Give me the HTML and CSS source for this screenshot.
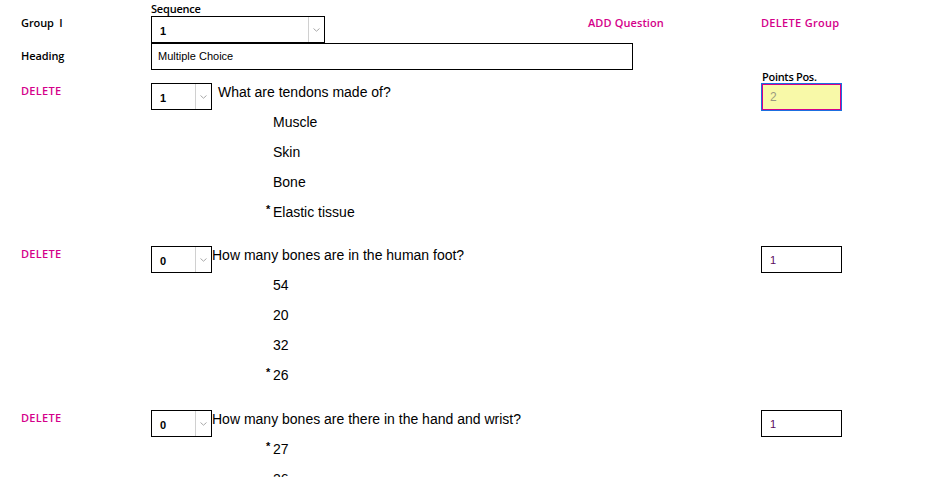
FILE: index.html
```html
<!DOCTYPE html>
<html>
<head>
<meta charset="utf-8">
<link rel="stylesheet" href="styles.css">
</head>
<body>
<div class="page">
  <div class="header">
    <div class="seq-label">Sequence</div>
    <div class="label group-label">Group&nbsp; I</div>
    <div class="select select-wide"><span class="sel-val">1</span><span class="sel-arrow"><svg width="7" height="4" viewBox="0 0 7 4"><polyline points="0.5,0.5 3.5,3.2 6.5,0.5" fill="none" stroke="#a8a8a8" stroke-width="1"/></svg></span></div>
    <div class="link add-q">ADD Question</div>
    <div class="link del-group">DELETE Group</div>
    <div class="label heading-label">Heading</div>
    <div class="text-input heading-input">Multiple Choice</div>
  </div>

  <div class="qblock">
    <div class="q-left"><span class="link">DELETE</span></div>
    <div class="q-mid">
      <div class="q-row">
        <div class="select select-small"><span class="sel-val">1</span><span class="sel-arrow"><svg width="7" height="4" viewBox="0 0 7 4"><polyline points="0.5,0.5 3.5,3.2 6.5,0.5" fill="none" stroke="#a8a8a8" stroke-width="1"/></svg></span></div>
        <div class="q-text q-text-gap">What are tendons made of?</div>
      </div>
      <div class="options">
        <div class="opt">Muscle</div>
        <div class="opt">Skin</div>
        <div class="opt">Bone</div>
        <div class="opt"><span class="star">*</span>Elastic tissue</div>
      </div>
    </div>
    <div class="q-right">
      <div class="points-label">Points Pos.</div>
      <div class="points-input focused">2</div>
    </div>
  </div>

  <div class="qblock">
    <div class="q-left"><span class="link">DELETE</span></div>
    <div class="q-mid">
      <div class="q-row">
        <div class="select select-small"><span class="sel-val">0</span><span class="sel-arrow"><svg width="7" height="4" viewBox="0 0 7 4"><polyline points="0.5,0.5 3.5,3.2 6.5,0.5" fill="none" stroke="#a8a8a8" stroke-width="1"/></svg></span></div>
        <div class="q-text">How many bones are in the human foot?</div>
      </div>
      <div class="options">
        <div class="opt">54</div>
        <div class="opt">20</div>
        <div class="opt">32</div>
        <div class="opt"><span class="star">*</span>26</div>
      </div>
    </div>
    <div class="q-right no-label">
      <div class="points-input">1</div>
    </div>
  </div>

  <div class="qblock">
    <div class="q-left"><span class="link">DELETE</span></div>
    <div class="q-mid">
      <div class="q-row">
        <div class="select select-small"><span class="sel-val">0</span><span class="sel-arrow"><svg width="7" height="4" viewBox="0 0 7 4"><polyline points="0.5,0.5 3.5,3.2 6.5,0.5" fill="none" stroke="#a8a8a8" stroke-width="1"/></svg></span></div>
        <div class="q-text">How many bones are there in the hand and wrist?</div>
      </div>
      <div class="options">
        <div class="opt"><span class="star">*</span>27</div>
        <div class="opt">26</div>
        <div class="opt">28</div>
        <div class="opt">24</div>
      </div>
    </div>
    <div class="q-right no-label">
      <div class="points-input">1</div>
    </div>
  </div>
</div>
</body>
</html>
```

FILE: styles.css
```css
html, body {
  margin: 0;
  padding: 0;
  background: #fff;
}
body {
  font-family: "Liberation Sans", Arial, sans-serif;
  color: #000;
  overflow: hidden;
}
.page {
  padding-left: 21px;
}
.header {
  display: grid;
  grid-template-columns: 130px 437px 173px auto;
  grid-template-rows: 16px 27px 27px;
}
.seq-label {
  grid-column: 2;
  grid-row: 1;
  font-family: "Open Sans", sans-serif;
  font-weight: 600;
  font-size: 11px;
  line-height: 13px;
  padding-top: 2px;
  letter-spacing: -0.2px;
}
.label {
  font-family: "Open Sans", sans-serif;
  font-weight: 600;
  font-size: 11px;
  line-height: 13px;
  letter-spacing: -0.1px;
}
.group-label {
  grid-column: 1;
  grid-row: 2;
  padding-top: 0;
}
.heading-label {
  grid-column: 1;
  grid-row: 3;
  padding-top: 6px;
}
.link {
  font-family: "Open Sans", sans-serif;
  font-weight: 600;
  font-size: 11px;
  line-height: 13px;
  color: #d4008a;
  letter-spacing: 0.3px;
}
.add-q {
  grid-column: 3;
  grid-row: 2;
  padding-top: 0;
  letter-spacing: 0.1px;
}
.del-group {
  grid-column: 4;
  grid-row: 2;
  padding-top: 0;
}
.select {
  box-sizing: border-box;
  border: 1px solid #000;
  background: #fff;
  display: flex;
  align-items: stretch;
  font-family: "Liberation Sans", Arial, sans-serif;
  font-weight: 700;
  font-size: 11px;
}
.sel-val {
  flex: 1;
  padding-left: 8px;
  padding-top: 8px;
  line-height: 13px;
}
.sel-arrow {
  width: 15px;
  border-left: 1px solid #d0d0d0;
  display: flex;
  align-items: center;
  justify-content: center;
}
.select-wide {
  grid-column: 2;
  grid-row: 2;
  width: 174px;
  height: 27px;
}
.text-input {
  box-sizing: border-box;
  border: 1px solid #000;
  font-family: "Liberation Sans", Arial, sans-serif;
  font-size: 11px;
  line-height: 13px;
  padding: 6px 0 0 6px;
}
.heading-input {
  grid-column: 2 / 4;
  grid-row: 3;
  width: 482px;
  height: 27px;
}
.qblock {
  display: grid;
  grid-template-columns: 130px 610px auto;
  margin-top: 1px;
  padding-bottom: 6px;
}
.qblock + .qblock + .qblock {
  margin-top: 2px;
}
.q-left {
  padding-top: 12px;
  line-height: 14px;
}
.q-mid {
  padding-top: 12px;
}
.q-row {
  display: flex;
  align-items: flex-start;
}
.select-small {
  width: 61px;
  height: 27px;
}
.q-text {
  font-size: 14px;
  line-height: 18px;
  white-space: nowrap;
}
.q-text-gap {
  margin-left: 6px;
}
.options {
  margin-top: -3px;
  padding-left: 122px;
}
.opt {
  font-size: 14px;
  line-height: 30px;
  white-space: nowrap;
}
.star {
  display: inline-block;
  width: 7px;
  margin-left: -7px;
  font-size: 11px;
  font-weight: 700;
  vertical-align: 4px;
  line-height: 10px;
}
.q-right {
  display: flex;
  flex-direction: column;
}
.q-right.no-label {
  padding-top: 12px;
}
.points-label {
  font-family: "Open Sans", sans-serif;
  font-weight: 600;
  font-size: 11px;
  line-height: 12px;
  letter-spacing: -0.3px;
  padding-left: 1px;
}
.points-input {
  box-sizing: border-box;
  width: 81px;
  height: 27px;
  border: 1px solid #000;
  font-family: "Liberation Sans", Arial, sans-serif;
  font-size: 11px;
  line-height: 13px;
  padding: 7px 0 0 8px;
  color: #5a0a5e;
}
.points-input.focused {
  height: 28px;
  border: 1px solid #1b6fe0;
  box-shadow: inset 0 0 0 1px #d4008a;
  background: #f8f9a8;
  color: #9a9a80;
  font-size: 12px;
}
```
